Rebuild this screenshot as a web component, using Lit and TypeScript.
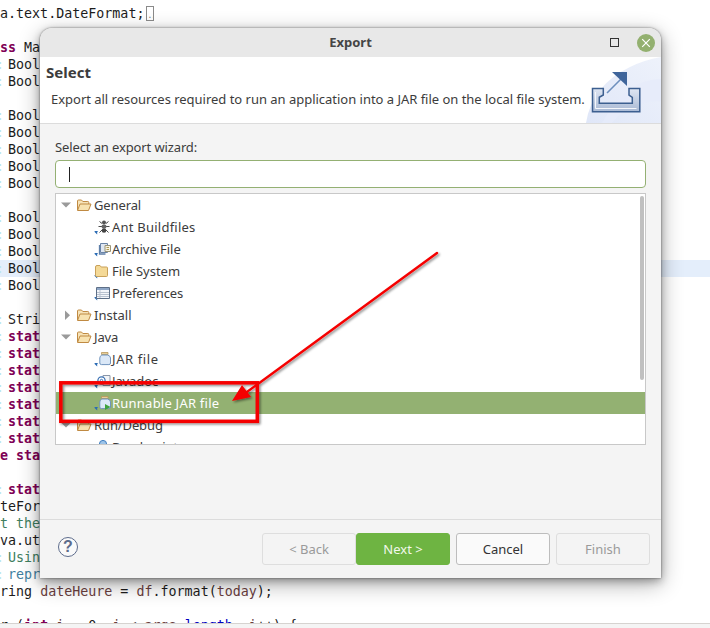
import { LitElement, html, css, svg } from "lit";
import { customElement } from "lit/decorators.js";

type Seg = [string, string?];
const K = "k", C = "c", V = "v", F = "f", M = "m", D = "d";
const lines: (Seg[] | null)[] = [
  [["a.text.DateFormat;"]],
  null,
  [["ss", K], [" Ma"]],
  [[":", M], ["Bool"]],
  [[":", M], ["Bool"]],
  null,
  [[":", M], ["Bool"]],
  [[":", M], ["Bool"]],
  [[":", M], ["Bool"]],
  [[":", M], ["Bool"]],
  [[":", M], ["Bool"]],
  null,
  [[":", M], ["Bool"]],
  [[":", M], ["Bool"]],
  [[":", M], ["Bool"]],
  [[":", M], ["Bool"]],
  [[":", M], ["Bool"]],
  null,
  [[":", M], ["Stri"]],
  [[":", M], ["stat", K]],
  [[":", M], ["stat", K]],
  [[":", M], ["stat", K]],
  [[":", M], ["stat", K]],
  [[":", M], ["stat", K]],
  [[":", M], ["stat", K]],
  [[":", M], ["stat", K]],
  [["e sta", K]],
  null,
  [[":", M], ["stat", K]],
  [["teFor"]],
  [["t the", C]],
  [["va.ut"]],
  [[":", M], ["Usin", C]],
  [[":", M], ["repr", D]],
  [["ring "], ["dateHeure", V], [" = "], ["df", V], [".format("], ["today", V], [");"]],
  null,
  [["r ("], ["int", K], [" "], ["i", V], [" = 0; "], ["i", V], [" < "], ["args", V], ["."], ["length", F], ["; "], ["i", V], ["++) {"]],
];

const mark = svg`<path d="M.6 15h3.6l-1 1v2.600l-2.600-2.600z" fill="#2b6cb5"/>`;

function jar() {
  return svg`<path d="M7.500 4.500h6.500v2H7.500z" fill="#e8cf97" stroke="#b8975a" stroke-width=".8"/><path d="M7.800 7h6q2.700 1 2.700 3v5q0 1.600-1.600 1.600H7.400q-1.600 0-1.600-1.600v-5q0-2 2-3z" fill="#dbe8f7" stroke="#6f93bd"/>`;
}

const icons: Record<string, unknown> = {
  ant: svg`${mark}<path d="M8 7.500 5.500 5.500M8 10.500 4.500 10.500M8 14 5.500 16.500M12 7.500 14.500 5.500M12 10.500 15.500 10.500M12 14 14.500 16.500" stroke="#4a4a4a" fill="none"/><circle cx="10" cy="6.500" r="2" fill="#555"/><ellipse cx="10" cy="10.500" rx="2.600" ry="2.100" fill="#666"/><ellipse cx="10" cy="14.500" rx="2.300" ry="2.200" fill="#444"/>`,
  archive: svg`${mark}<path d="M6.500 5.500h7v9h-7z" fill="#dfe7f2" stroke="#6b84a6"/><path d="M5.500 7v9h6" stroke="#5f7fa8" stroke-width="1.300" fill="none"/><path d="M11 7.500h5.500v6H11z" fill="#f7f3e2" stroke="#9a9478"/><path d="M12.500 9.500h2.500M12.500 11.500h2.500" stroke="#b09a55"/>`,
  folder: svg`${mark}<path d="M1.500 7q0-1.500 1.500-1.500h3L7.200 7h5.300q1 0 1 1v7.500q0 1-1 1h-10q-1 0-1-1z" fill="#f4d997" stroke="#c9a15a"/>`,
  prefs: svg`${mark}<path d="M2.500 5.500h13v11h-13z" fill="#f4f6fa" stroke="#5e6f87"/><path d="M3 6h12v2H3z" fill="#8ea6c6"/><path d="M3 10.500h12M3 12.500h12M3 14.500h12M6 8v8" stroke="#b9c2cf"/>`,
  jar: svg`${mark}${jar()}`,
  javadoc: svg`${mark}<path d="M9 5.500h7v10H9z" fill="#f4f5f7" stroke="#8a96a8"/><circle cx="7.500" cy="10.500" r="3.600" fill="#fff" stroke="#3f74b5" stroke-width="1.300"/><circle cx="7.500" cy="10.500" r="1.200" fill="none" stroke="#3f74b5"/>`,
  run: svg`${mark}${jar()}<path d="M11 12l5.500 3-5.500 3z" fill="#3ea23e"/>`,
  bp: svg`${mark}<circle cx="9" cy="8" r="3.600" fill="#9cc3e8" stroke="#3f7ec0"/>`,
};

const tree: { t: string; ls: number; i?: string; p?: "open" | "closed"; sel?: boolean }[] = [
  { t: "General", ls: -0.12, p: "open" },
  { t: "Ant Buildfiles", ls: 0.23, i: "ant" },
  { t: "Archive File", ls: -0.04, i: "archive" },
  { t: "File System", ls: -0.03, i: "folder" },
  { t: "Preferences", ls: -0.12, i: "prefs" },
  { t: "Install", ls: 0.02, p: "closed" },
  { t: "Java", ls: -0.12, p: "open" },
  { t: "JAR file", ls: 0.6, i: "jar" },
  { t: "Javadoc", ls: -0.12, i: "javadoc" },
  { t: "Runnable JAR file", ls: 0.23, i: "run", sel: true },
  { t: "Run/Debug", ls: -0.12, p: "open" },
  { t: "Breakpoints", ls: -0.12, i: "bp" },
];

@customElement("app-root")
export class AppRoot extends LitElement {
  static styles = css`
    :host { display: block; position: relative; width: 710px; height: 628px; overflow: hidden; background: #fff; font-family: "Noto Sans", sans-serif; }
    .editor { height: 623px; box-sizing: border-box; padding-top: 5px; overflow: hidden; font: 13.33px/17px "DejaVu Sans Mono", monospace; color: #1c1c1c; white-space: pre; }
    .line { height: 17px; display: flex; align-items: center; }
    .hl { background: #e4eefb; }
    .k { color: #7f0055; font-weight: 700; }
    .c { color: #3f7f5f; }
    .d { color: #3f7f9f; }
    .v { color: #6a3e3e; }
    .f { color: #0000c0; }
    .m { color: #bce6ee; width: 8px; transform: translateX(-4px); }
    .fold { box-sizing: border-box; width: 8px; height: 15px; margin-left: 2px; border: 1px solid #8a8a8a; font-size: 8px; line-height: 18px; letter-spacing: -1px; color: #777; text-align: center; overflow: hidden; }
    .status { height: 5px; border-top: 1px solid #d6d3d0; background: #f4f4f4; }
    .win { position: absolute; left: 40px; top: 28px; width: 621px; height: 550px; display: flex; flex-direction: column; background: #f4f4f4; border-radius: 12px 12px 0 0; box-shadow: 0 0 2px rgba(0,0,0,.55), 0 3px 8px rgba(0,0,0,.3), 0 6px 22px rgba(0,0,0,.32); overflow: hidden; color: #3c3c3c; font-size: 13px; }
    .title { height: 29px; flex: none; display: grid; grid-template-columns: 1fr auto 1fr; align-items: center; background: #e8e8e8; }
    .title b { grid-column: 2; margin-bottom: 2px; font-size: 13px; font-weight: 700; color: #454545; }
    .ctrl { grid-column: 3; display: flex; justify-content: flex-end; align-items: center; gap: 18px; padding-right: 6px; }
    .max { box-sizing: border-box; width: 9px; height: 9px; border: 1.5px solid #333; }
    .close { display: block; width: 18px; height: 18px; }
    .head { height: 66px; flex: none; display: flex; justify-content: space-between; background: #fff; border-bottom: 1px solid #dcdcdc; }
    .htext { padding: 5px 0 0 6px; display: flex; flex-direction: column; }
    .htext b { font-size: 15px; line-height: 20px; font-weight: 700; color: #3c3c3c; }
    .htext span { margin: 8px 0 0 5px; font-size: 13px; line-height: 18px; letter-spacing: -.02px; white-space: nowrap; }
    .banner { display: block; width: 75px; height: 66px; }
    .body { flex: 1; padding: 14px 15px 0; display: flex; flex-direction: column; }
    .label { line-height: 18px; margin-bottom: 4px; letter-spacing: -.12px; }
    .input { box-sizing: border-box; height: 28px; flex: none; display: flex; align-items: center; padding-left: 13px; background: #fff; border: 1px solid #94b073; border-radius: 4px; margin-bottom: 5px; }
    .caret { width: 1px; height: 15px; background: #222; }
    .tree { position: relative; box-sizing: border-box; height: 252px; flex: none; background: #fff; border: 1px solid #c8c8c8; overflow: hidden; }
    .row { height: 22px; display: flex; align-items: center; white-space: nowrap; }
    .row.parent { padding-left: 4px; }
    .row.child { padding-left: 38px; }
    .row.sel { background: #93b172; color: #fff; }
    .tw { display: block; width: 12px; height: 12px; margin-right: 4px; }
    .fo { display: block; width: 16px; height: 16px; margin-right: 2px; }
    .ic { display: block; width: 18px; height: 22px; }
    .thumb { position: absolute; left: 584px; top: 2px; width: 4px; height: 184px; border-radius: 2px; background: #c0c0c0; }
    .foot { height: 59px; flex: none; box-sizing: border-box; border-top: 1px solid #dcdcdc; padding: 13px 11px 0 18px; display: flex; align-items: flex-start; }
    .help { box-sizing: border-box; width: 20px; height: 20px; margin-top: 4px; border: 1.5px solid #5d6c8c; border-radius: 50%; background: #fafafa; color: #5d6c8c; font: 700 16px/17px "Liberation Sans", sans-serif; text-align: center; }
    .btns { margin-left: auto; display: flex; }
    .btn { box-sizing: border-box; width: 94px; height: 32px; display: flex; align-items: center; justify-content: center; border: 1px solid #dedede; border-radius: 3px; color: #9a9a9a; background: #f4f4f4; }
    .next { background: #6eb442; border-color: #6eb442; color: #f2f8ec; }
    .cancel { margin: 0 6px; background: #fafafa; border-color: #bdbdbd; color: #333; }
    .notes { position: absolute; left: 0; top: 0; width: 710px; height: 628px; pointer-events: none; }
  `;

  private code() {
    return lines.map((l, i) => {
      const hl = i === 15 ? "line hl" : "line";
      if (!l) return html`<div class=${hl}></div>`;
      return html`<div class=${hl}>${l.map(([t, c]) => html`<span class=${c ?? ""}>${t}</span>`)}${i === 0 ? html`<span class="fold">..</span>` : ""}</div>`;
    });
  }

  private row(r: (typeof tree)[number]) {
    const label = html`<span style="letter-spacing:${r.ls}px">${r.t}</span>`;
    if (r.p) {
      const tri = r.p === "open"
        ? svg`<path d="M1 3.500h10l-5 5z" fill="#9a9a9a"/>`
        : svg`<path d="M5 1.500l5 4.800-5 4.800z" fill="#9a9a9a"/>`;
      return html`<div class="row parent">
        <svg class="tw" viewBox="0 0 12 12">${tri}</svg>
        <svg class="fo" viewBox="0 0 16 16">
          <path d="M1.500 13V4q0-1 1-1h3l1.300 1.500h5q1 0 1 1V7" fill="#f6e3b8" stroke="#c08a42"/>
          <path d="M1.500 13.500 4 7h11l-2.500 6.500z" fill="#f7e2b0" stroke="#c08a42" stroke-linejoin="round"/>
        </svg>
        ${label}</div>`;
    }
    return html`<div class="row child ${r.sel ? "sel" : ""}">
      <svg class="ic" viewBox="0 0 18 22">${icons[r.i!]}</svg>
      ${label}</div>`;
  }

  render() {
    return html`
      <div class="editor">${this.code()}</div>
      <div class="status"></div>
      <div class="win">
        <div class="title">
          <b>Export</b>
          <div class="ctrl">
            <div class="max"></div>
            <svg class="close" viewBox="0 0 18 18"><circle cx="9" cy="9" r="9" fill="#93b06f"/><path d="M5.200 5.200l7.600 7.600M12.800 5.200l-7.600 7.600" stroke="#fff" stroke-width="1.200"/></svg>
          </div>
        </div>
        <div class="head">
          <div class="htext">
            <b>Select</b>
            <span>Export all resources required to run an application into a JAR file on the local file system.</span>
          </div>
          <svg class="banner" viewBox="0 0 75 66">
            <defs>
              <linearGradient id="bg" x1="0" y1="1" x2="1" y2="0"><stop offset="0" stop-color="#e0e7f8"/><stop offset="1" stop-color="#eef2fb"/></linearGradient>
              <linearGradient id="tr" x1="0" y1="0" x2="0" y2="1"><stop offset="0" stop-color="#dfe6f3"/><stop offset="1" stop-color="#a9b9d4"/></linearGradient>
            </defs>
            <path d="M0 66Q6 28 44 10 58 3 75 0V66z" fill="url(#bg)"/>
            <path d="M16 66Q40 22 75 22V44Q44 44 26 66z" fill="#e6ebfa" opacity=".8"/>
            <path d="M6.500 31.500h10.800v6.500l-4 2.300v6h33v-6l-3.300-2.300v-6.500h10.800v23.200h-47.300z" fill="url(#tr)" stroke="#3c5f90" stroke-width="1.500"/>
            <path d="M9.500 35v16.500h41" fill="none" stroke="#f5f7fb" stroke-width="1"/>
            <path d="M21 36 39 18" stroke="#6d8fbd" stroke-width="1.600"/>
            <path d="M26 15h15v14z" fill="#3f659b"/>
          </svg>
        </div>
        <div class="body">
          <div class="label">Select an export wizard:</div>
          <div class="input"><div class="caret"></div></div>
          <div class="tree">
            ${tree.map((r) => this.row(r))}
            <div class="thumb"></div>
          </div>
        </div>
        <div class="foot">
          <div class="help">?</div>
          <div class="btns">
            <div class="btn">&lt; Back</div>
            <div class="btn next">Next &gt;</div>
            <div class="btn cancel">Cancel</div>
            <div class="btn">Finish</div>
          </div>
        </div>
      </div>
      <svg class="notes" viewBox="0 0 710 628">
        <defs><filter id="sh" x="-5%" y="-5%" width="110%" height="110%"><feDropShadow dx="1.500" dy="1.500" stdDeviation="1" flood-color="#000" flood-opacity=".45"/></filter></defs>
        <g filter="url(#sh)">
          <rect x="60.800" y="382.800" width="196.500" height="38.500" fill="none" stroke="#f50000" stroke-width="3.500"/>
          <path d="M437 253 240 397" stroke="#f50000" stroke-width="2.400" stroke-linecap="round"/>
          <path d="M232 401 242 385 251 397z" fill="#f50000"/>
        </g>
      </svg>
    `;
  }
}
